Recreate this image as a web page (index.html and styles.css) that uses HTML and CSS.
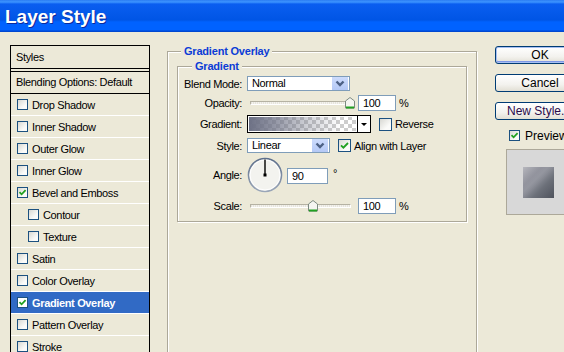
FILE: index.html
```html
<!DOCTYPE html>
<html lang="en">
<head>
    <meta charset="UTF-8">
    <title>Layer Style</title>
    <link rel="stylesheet" href="styles.css">
</head>
<body>

    <div class="titlebar">Layer Style</div>

    <div class="dialog">

        <!-- Left: list of effects -->
        <div class="styles-list">
            <div class="list-head">Styles</div>
            <div class="list-blend">Blending Options: Default</div>
            <div class="list-item"><span class="cb"></span>Drop Shadow</div>
            <div class="list-item"><span class="cb"></span>Inner Shadow</div>
            <div class="list-item"><span class="cb"></span>Outer Glow</div>
            <div class="list-item"><span class="cb"></span>Inner Glow</div>
            <div class="list-item"><span class="cb"><svg viewBox="0 0 9 9"><path d="M1.5 4.2 L3.6 6.3 L7.6 2.2" /></svg></span>Bevel and Emboss</div>
            <div class="list-item sub"><span class="cb"></span>Contour</div>
            <div class="list-item sub"><span class="cb"></span>Texture</div>
            <div class="list-item"><span class="cb"></span>Satin</div>
            <div class="list-item"><span class="cb"></span>Color Overlay</div>
            <div class="list-item selected"><span class="cb"><svg viewBox="0 0 9 9"><path d="M1.5 4.2 L3.6 6.3 L7.6 2.2" /></svg></span>Gradient Overlay</div>
            <div class="list-item"><span class="cb"></span>Pattern Overlay</div>
            <div class="list-item"><span class="cb"></span>Stroke</div>
        </div>

        <!-- Middle: settings -->
        <div class="group outer">
            <div class="group-title">Gradient Overlay</div>
            <div class="group inner">
                <div class="group-title">Gradient</div>

                <div class="row r-blend">
                    <span class="label">Blend Mode:</span>
                    <div class="select blend-select">
                        <span class="value">Normal</span>
                        <span class="drop"><svg viewBox="0 0 16 11"><polyline points="4.5,3.5 8,7 11.5,3.5" /></svg></span>
                    </div>
                </div>

                <div class="row r-opacity">
                    <span class="label">Opacity:</span>
                    <div class="slider">
                        <div class="track"></div>
                        <svg class="thumb" style="left: 98px" viewBox="0 0 10 12"><path class="thumb-body" d="M0.5 11 V4 L5 0.5 L9.5 4 V11 Z" /><rect class="thumb-foot" x="1" y="9.5" width="8" height="2" /></svg>
                    </div>
                    <span class="field">100</span>
                    <span class="unit">%</span>
                </div>

                <div class="row r-gradient">
                    <span class="label">Gradient:</span>
                    <div class="swatch"></div>
                    <div class="swatch-arrow"></div>
                    <span class="cb big check-reverse"></span>
                    <span class="cb-text">Reverse</span>
                </div>

                <div class="row r-style">
                    <span class="label">Style:</span>
                    <div class="select style-select">
                        <span class="value">Linear</span>
                        <span class="drop"><svg viewBox="0 0 16 11"><polyline points="4.5,3.5 8,7 11.5,3.5" /></svg></span>
                    </div>
                    <span class="cb big check-align"><svg viewBox="0 0 11 11"><path d="M2 5.3 L4.4 7.7 L9 3" /></svg></span>
                    <span class="cb-text">Align with Layer</span>
                </div>

                <div class="row r-angle">
                    <span class="label">Angle:</span>
                    <svg class="dial" viewBox="0 0 36 36">
                        <defs>
                            <linearGradient id="ring" x1="0" y1="0" x2="0" y2="1">
                                <stop offset="0" stop-color="#5d6f8c" />
                                <stop offset="1" stop-color="#9aa6b8" />
                            </linearGradient>
                        </defs>
                        <circle cx="18" cy="18" r="16.5" fill="#f3f3ef" stroke="url(#ring)" stroke-width="1.6" />
                        <circle cx="18" cy="18" r="15" fill="none" stroke="#ffffff" stroke-width="1" />
                        <line x1="18" y1="18" x2="18" y2="2.5" stroke="#000" stroke-width="1.4" />
                        <rect x="16.5" y="16.5" width="3" height="3" fill="#000" />
                    </svg>
                    <span class="field angle-field">90</span>
                    <span class="degree">°</span>
                </div>

                <div class="row r-scale">
                    <span class="label">Scale:</span>
                    <div class="slider">
                        <div class="track"></div>
                        <svg class="thumb" style="left: 61px" viewBox="0 0 10 12"><path class="thumb-body" d="M0.5 11 V4 L5 0.5 L9.5 4 V11 Z" /><rect class="thumb-foot" x="1" y="9.5" width="8" height="2" /></svg>
                    </div>
                    <span class="field">100</span>
                    <span class="unit">%</span>
                </div>
            </div>
        </div>

        <!-- Right: buttons and preview -->
        <div class="side">
            <div class="btn default">OK</div>
            <div class="btn">Cancel</div>
            <div class="btn new-style">New Style...</div>
            <div class="preview-check">
                <span class="cb"><svg viewBox="0 0 9 9"><path d="M1.5 4.2 L3.6 6.3 L7.6 2.2" /></svg></span>
                <span>Preview</span>
            </div>
            <div class="preview-box">
                <div class="preview-thumb"></div>
            </div>
        </div>

    </div>

</body>
</html>
```

FILE: styles.css
```css
html, body {
    margin: 0;
    padding: 0;
    width: 564px;
    height: 352px;
    overflow: hidden;
}

body {
    background-color: #ece9d8;
    color: #000;
    font-family: "Liberation Sans", Arial, sans-serif;
    font-size: 11px;
    letter-spacing: -0.35px;
}

/* XP window title */
.titlebar {
    height: 32px;
    padding-left: 5px;
    line-height: 34px;
    font-size: 19px;
    font-weight: bold;
    letter-spacing: 0;
    color: #fff;
    text-shadow: 1px 1px 0 #0a2a9c;
    background: linear-gradient(to bottom,
        #2b7cf2 0, #3d95ff 2px, #0a5ef0 4px, #0055e5 20px,
        #0062ff 22px, #0062ff 30px, #0047d0 31px);
}

.dialog {
    display: flex;
    align-items: flex-start;
}

/* Left list */
.styles-list {
    flex-shrink: 0;
    width: 140px;
    height: 330px;
    margin: 13px 0 0 10px;
    box-sizing: border-box;
    border: 1px solid #000;
    border-bottom: 0;
}

.list-head {
    height: 22px;
    line-height: 22px;
    padding-left: 5px;
    border-bottom: 1px solid #000;
    margin-bottom: 2px;
}

.list-blend {
    height: 21px;
    line-height: 21px;
    padding-left: 5px;
    border-top: 1px solid #000;
    border-bottom: 1px solid #000;
}

.list-item {
    display: flex;
    align-items: center;
    height: 21px;
    padding-left: 6px;
    border-bottom: 1px solid #fff;
}

.list-item .cb {
    margin-right: 4px;
}

.list-item.sub {
    padding-left: 17px;
}

.list-item.selected {
    background-color: #316ac5;
    color: #fff;
    font-weight: bold;
}

.list-item.selected .cb {
    background: #fff;
}

/* Checkboxes */
.cb {
    display: inline-flex;
    align-items: center;
    justify-content: center;
    flex-shrink: 0;
    width: 11px;
    height: 11px;
    box-sizing: border-box;
    border: 1px solid #1c5180;
    background: linear-gradient(135deg, #d8d8d2, #fbfbf9 70%);
}

.cb svg {
    width: 9px;
    height: 9px;
}

.cb path {
    fill: none;
    stroke: #21a121;
    stroke-width: 1.8;
}

.cb.big {
    width: 13px;
    height: 13px;
}

.cb.big svg {
    width: 11px;
    height: 11px;
}

.cb-text {
    margin-left: 3px;
}

/* Group boxes */
.group {
    position: relative;
    box-sizing: border-box;
    border: 1px solid #aca899;
    box-shadow: 1px 1px 0 #fff, inset 1px 1px 0 #fff;
}

.group-title {
    position: absolute;
    top: -7px;
    padding: 0 3px;
    line-height: 13px;
    font-weight: bold;
    color: #0b3cd6;
    letter-spacing: -0.2px;
    background-color: #ece9d8;
}

.outer {
    flex-shrink: 0;
    width: 310px;
    height: 330px;
    margin: 19px 0 0 17px;
}

.outer > .group-title {
    left: 13px;
}

.inner {
    width: 290px;
    margin: 14px 0 0 9px;
    padding: 9px 0 7px 0;
}

.inner > .group-title {
    left: 14px;
}

/* Rows of the form */
.row {
    display: flex;
    align-items: center;
}

.row .label {
    width: 64px;
    margin-right: 5px;
    text-align: right;
    flex-shrink: 0;
}

.r-blend   { height: 15px; margin-bottom: 4px; }
.r-opacity { height: 16px; margin-bottom: 4px; }
.r-gradient { height: 18px; margin-bottom: 5px; }
.r-style   { height: 15px; margin-bottom: 4px; }
.r-angle   { height: 36px; margin-bottom: 5px; }
.r-scale   { height: 16px; }

.select {
    display: flex;
    height: 15px;
    box-sizing: border-box;
    border: 1px solid #7f9db9;
    background-color: #fff;
}

.select .value {
    flex: 1;
    padding-left: 4px;
    line-height: 13px;
}

.select .drop {
    width: 16px;
    margin: 0 1px 0 0;
    background: linear-gradient(#cddcfc, #b4c8f6);
}

.select .drop svg {
    display: block;
    width: 16px;
    height: 13px;
}

.select polyline {
    fill: none;
    stroke: #4d6185;
    stroke-width: 2.4;
}

.blend-select {
    width: 103px;
}

.style-select {
    width: 83px;
    margin-right: 8px;
}

/* Sliders */
.slider {
    position: relative;
    width: 108px;
    height: 16px;
    margin-right: 3px;
    display: flex;
    align-items: center;
}

.track {
    width: 101px;
    height: 4px;
    margin-left: 3px;
    box-sizing: border-box;
    border: 1px solid #b5b2a3;
    border-bottom-color: #fff;
    border-right-color: #fff;
    background: repeating-linear-gradient(to right, #e6e4dc 0 1px, #f4f3ee 1px 2px);
}

.thumb {
    position: absolute;
    top: 2px;
    width: 10px;
    height: 12px;
}

.thumb-body {
    fill: #f5f5f1;
    stroke: #7c8a80;
    stroke-width: 1;
}

.thumb-foot {
    fill: #21a121;
}

.field {
    width: 38px;
    height: 16px;
    box-sizing: border-box;
    border: 1px solid #7f9db9;
    background-color: #fff;
    padding-left: 4px;
    line-height: 14px;
}

.unit {
    margin-left: 3px;
}

/* Gradient picker */
.swatch {
    width: 111px;
    height: 18px;
    box-sizing: border-box;
    border: 1px solid #000;
    box-shadow: inset 0 0 0 1px #fff;
    background:
        linear-gradient(to right, rgba(108, 112, 132, 1) 0%, rgba(112, 116, 136, 0.75) 25%, rgba(120, 124, 140, 0.35) 55%, rgba(130, 134, 148, 0) 85%),
        repeating-conic-gradient(#cdcdcd 0 25%, #fff 0 50%) 0 0 / 8px 8px;
}

.swatch-arrow {
    width: 13px;
    height: 18px;
    box-sizing: border-box;
    border: 1px solid #000;
    border-left: 0;
    background-color: #fff;
    margin-right: 8px;
    display: flex;
    align-items: center;
    justify-content: center;
}

.swatch-arrow::after {
    content: "";
    border-left: 3px solid transparent;
    border-right: 3px solid transparent;
    border-top: 3px solid #000;
}

/* Angle */
.dial {
    width: 36px;
    height: 36px;
    margin-right: 4px;
}

.angle-field {
    width: 41px;
    margin-top: 2px;
}

.degree {
    margin-left: 5px;
    margin-bottom: 4px;
}

/* Right column */
.side {
    flex-shrink: 0;
    width: 90px;
    margin: 14px 0 0 18px;
}

.btn {
    height: 18px;
    box-sizing: border-box;
    margin-bottom: 10px;
    border: 1px solid #003c74;
    border-radius: 3px;
    background: linear-gradient(#ffffff, #f3f2ee 60%, #e2dfd4);
    text-align: center;
    line-height: 16px;
    font-size: 12px;
    letter-spacing: 0;
}

.btn.default {
    box-shadow: inset 0 0 0 1px #a8c0f2, inset 0 -1px 0 1px #7e98e6;
}

.btn.new-style {
    text-align: left;
    padding-left: 11px;
    color: #2a0a4a;
}

.preview-check {
    display: flex;
    align-items: center;
    height: 11px;
    margin: 0 0 8px 14px;
    font-size: 12px;
    letter-spacing: 0;
}

.preview-check .cb {
    margin-right: 5px;
}

.preview-box {
    width: 80px;
    height: 66px;
    box-sizing: border-box;
    margin-left: 11px;
    padding: 17px 0 0 16px;
    border: 1px solid #aca899;
    border-right: 0;
    background-color: #d8d8d8;
}

.preview-thumb {
    width: 31px;
    height: 31px;
    background:
        linear-gradient(135deg, rgba(190, 190, 196, 0.9) 0%, rgba(150, 150, 160, 0.6) 30%, rgba(110, 112, 122, 0) 55%),
        linear-gradient(315deg, #4e525c 0%, #6c7079 35%, #9497a0 60%, #7a7e88 100%);
}
```
